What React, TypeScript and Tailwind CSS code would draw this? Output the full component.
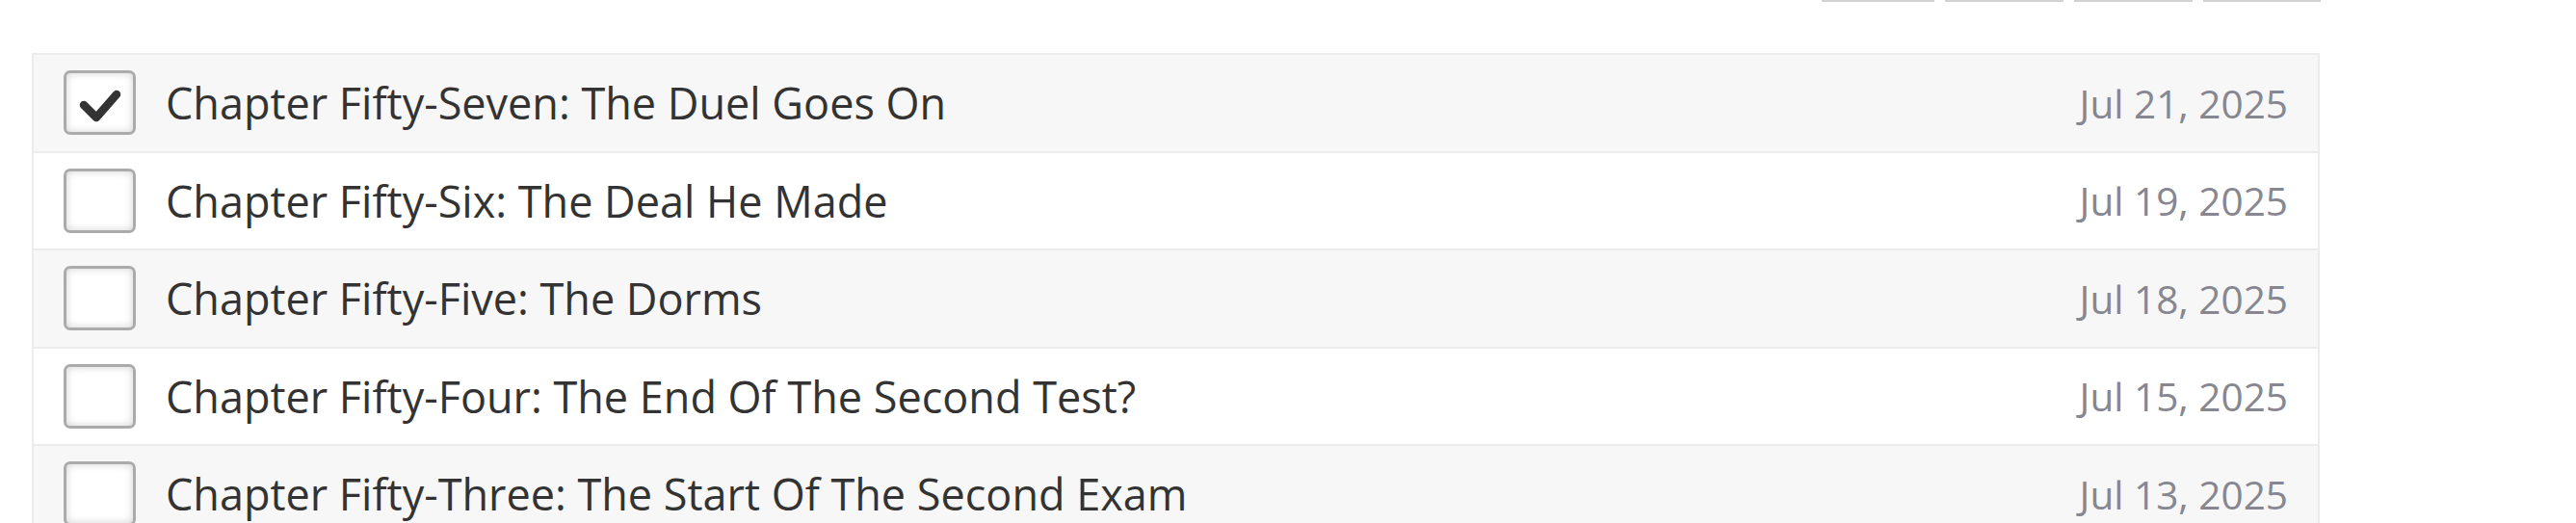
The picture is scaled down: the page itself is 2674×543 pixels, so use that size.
import React from "react";

const rows = [
  { title: "Chapter Fifty-Seven: The Duel Goes On", date: "Jul 21, 2025", checked: true },
  { title: "Chapter Fifty-Six: The Deal He Made", date: "Jul 19, 2025", checked: false },
  { title: "Chapter Fifty-Five: The Dorms", date: "Jul 18, 2025", checked: false },
  { title: "Chapter Fifty-Four: The End Of The Second Test?", date: "Jul 15, 2025", checked: false },
  { title: "Chapter Fifty-Three: The Start Of The Second Exam", date: "Jul 13, 2025", checked: false },
  { title: "Chapter Fifty-Two: The Test", date: "Jul 11, 2025", checked: false },
];

function Checkbox({ checked }: { checked: boolean }) {
  return (
    <div className="relative w-[75px] h-[67px] shrink-0 rounded-[7px] border-[3px] border-[#ababab] bg-white shadow-[inset_0_0_8px_rgba(0,0,0,0.18)]">
      {checked && (
        <svg className="absolute left-0 top-0" width="69" height="61" viewBox="0 0 69 61">
          <polyline
            points="18,33 31,46 52,22"
            fill="none"
            stroke="#333333"
            strokeWidth="8.5"
            strokeLinecap="round"
            strokeLinejoin="round"
          />
        </svg>
      )}
    </div>
  );
}

export default function App() {
  return (
    <div className="w-[2674px] h-[543px] overflow-hidden bg-white" style={{ fontFamily: '"Open Sans", "Noto Sans", sans-serif' }}>
      <div className="flex justify-end gap-[11px] pr-[265px] h-[2px]">
        <div className="w-[117px] h-[2px] bg-[#d2d2d2]" />
        <div className="w-[123px] h-[2px] bg-[#d2d2d2]" />
        <div className="w-[123px] h-[2px] bg-[#d2d2d2]" />
        <div className="w-[122px] h-[2px] bg-[#d2d2d2]" />
      </div>
      <div className="ml-[33px] mt-[53px] w-[2375px] border-2 border-[#ececec]">
        {rows.map((r, i) => (
          <div
            key={i}
            className={`flex items-center h-[101.5px] border-b-2 border-[#ececec] pl-[31px] pr-[31px] ${i % 2 === 0 ? "bg-[#f7f7f7]" : "bg-white"}`}
          >
            <Checkbox checked={r.checked} />
            <div className="ml-[31px] flex-1 text-[45px] leading-none text-[#333333] whitespace-nowrap">{r.title}</div>
            <div className="text-[40.5px] leading-none text-[#878791] whitespace-nowrap pt-[2px]">{r.date}</div>
          </div>
        ))}
      </div>
    </div>
  );
}
